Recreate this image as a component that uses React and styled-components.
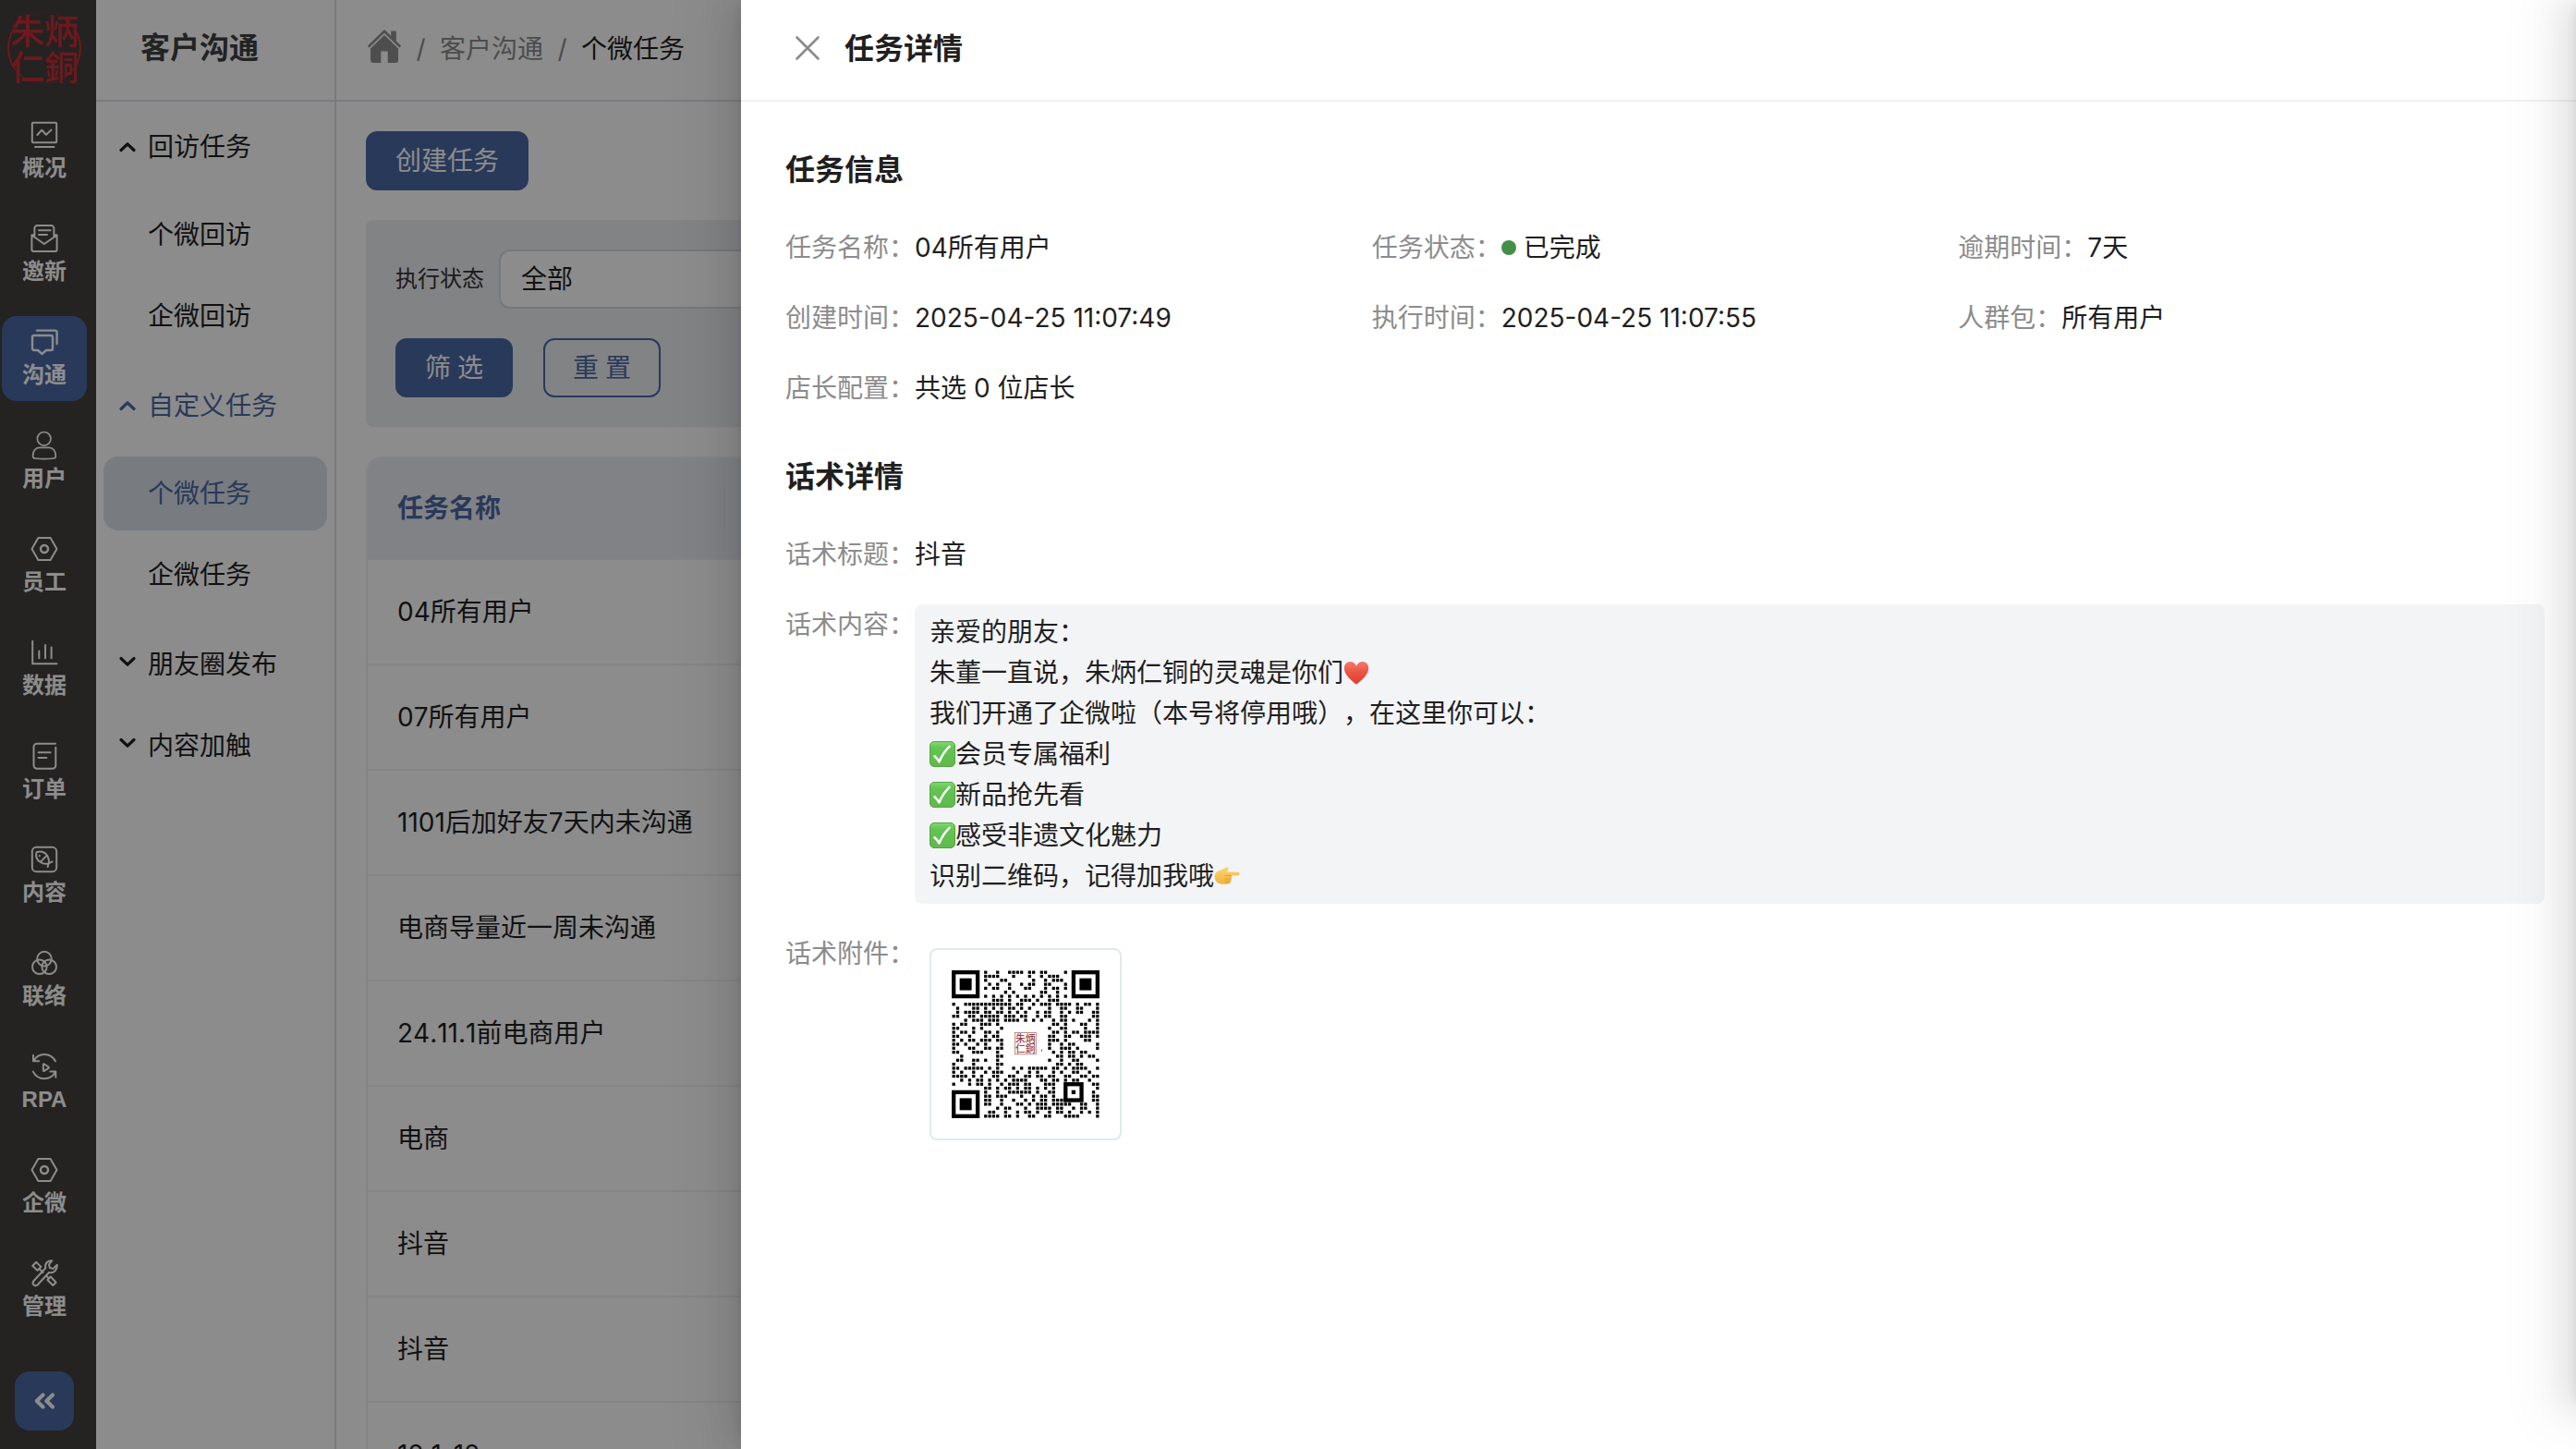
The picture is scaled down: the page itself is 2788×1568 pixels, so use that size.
import React from 'react';
import styled, { createGlobalStyle, css } from 'styled-components';

const SANS = `Inter, "Noto Sans CJK SC", sans-serif`;

const Global = createGlobalStyle`
  * { box-sizing: border-box; }
  html, body { margin: 0; height: 100%; overflow: hidden; }
  body { font-family: ${SANS}; font-size: 28px; line-height: 44px; color: #1f1f1f; background: #fff; text-spacing-trim: space-all; }
`;

const blue = '#4b69a5';

const Page = styled.div`
  position: relative;
  display: flex;
  width: 100vw;
  height: 100vh;
  overflow: hidden;
`;

/* ---------- icon rail ---------- */
const Rail = styled.nav`
  flex: none;
  width: 104px;
  display: flex;
  flex-direction: column;
  align-items: flex-start;
  background: #42403d;
  color: #fff;
`;
const Seal = styled.div`
  width: 80px;
  height: 78px;
  margin: 13px 0 27px 8px;
  display: grid;
  grid-template-columns: 37px 37px;
  grid-template-rows: 39px 39px;
  justify-content: center;
  border-radius: 50%;
  border-left: 2px solid #c82d3a;
  border-right: 2px solid #c82d3a;
  color: #c82d3a;
  font-family: "Noto Sans CJK TC", sans-serif;
  font-weight: 500;
  font-size: 37px;
  line-height: 39px;
  text-align: center;
`;
const RailList = styled.div`
  display: flex;
  flex-direction: column;
  gap: 20px;
  padding-left: 2px;
`;
const RailItem = styled.div`
  width: 92px;
  height: 92px;
  padding-top: 12px;
  display: flex;
  flex-direction: column;
  align-items: center;
  border-radius: 16px;
  background: ${(p) => (p.$active ? blue : 'transparent')};
  font-size: 24px;
  line-height: 39px;
`;
const RailLabel = styled.span`
  font-family: "Liberation Sans", "Noto Sans CJK SC", sans-serif;
  font-weight: 700;
`;
const Icon = styled.svg`
  display: block;
  width: 32px;
  height: 32px;
  fill: none;
  stroke: currentColor;
  stroke-width: 2;
  stroke-linecap: round;
  stroke-linejoin: round;
`;
const Collapse = styled.button`
  width: 64px;
  height: 64px;
  margin: auto 0 20px 16px;
  display: grid;
  place-items: center;
  padding: 0;
  border: 0;
  border-radius: 16px;
  background: ${blue};
  color: #fff;
`;

/* ---------- section menu ---------- */
const Menu = styled.aside`
  flex: none;
  width: 260px;
  border-right: 2px solid #dfdfe8;
`;
const MenuTitle = styled.h1`
  margin: 0;
  height: 110px;
  border-bottom: 2px solid #dfdfe8;
  padding-left: 48px;
  font-size: 32px;
  font-weight: 600;
  line-height: 103px;
  color: #404040;
`;
const MenuBody = styled.div`
  padding: 8px 8px 0;
  display: flex;
  flex-direction: column;
`;
const Group = styled.div`
  display: flex;
  flex-direction: column;
  gap: 8px;
  padding-bottom: ${(p) => (p.$open ? 8 : 0)}px;
  margin-bottom: 8px;
`;
const MenuRow = styled.div`
  height: 80px;
  padding: 1px 0 0 17px;
  display: flex;
  align-items: center;
  gap: 13px;
  color: ${(p) => (p.$blue ? blue : '#1f1f1f')};
`;
const Leaf = styled.div`
  height: 80px;
  line-height: 81px;
  padding-left: 48px;
  border-radius: 16px;
  color: ${(p) => (p.$active ? blue : '#1f1f1f')};
  background: ${(p) => (p.$active ? '#dae1e8' : 'transparent')};
`;
const Leaves = styled.div`
  padding-top: 8px;
  display: flex;
  flex-direction: column;
  gap: 8px;
`;
const Chevron = styled.svg`
  width: 18px;
  height: 12px;
  fill: none;
  stroke: currentColor;
  stroke-width: 3.2;
  stroke-linecap: round;
  stroke-linejoin: round;
  transform: ${(p) => (p.$open ? 'none' : 'translateY(-3px) rotate(180deg)')};
`;

/* ---------- main column ---------- */
const Main = styled.main`
  flex: 1;
  min-width: 0;
  display: flex;
  flex-direction: column;
`;
const Crumbs = styled.header`
  flex: none;
  height: 110px;
  border-bottom: 2px solid #dfdfe8;
  padding: 0 0 3px 33px;
  display: flex;
  align-items: center;
  color: #8c8c8c;
`;
const HomeIcon = styled.svg`
  width: 38px;
  height: 38px;
  margin-top: -5px;
  fill: #8f8f8f;
`;
const Slash = styled.span`
  width: 41px;
  text-align: center;
`;
const Current = styled.span`
  color: #1f1f1f;
`;
const Content = styled.div`
  padding: 32px 32px 0;
  display: flex;
  flex-direction: column;
  align-items: flex-start;
  gap: 32px;
`;
const Button = styled.button`
  height: 64px;
  padding: 0 30px;
  border: 2px solid ${blue};
  border-radius: 12px;
  font-family: inherit;
  font-size: 28px;
  line-height: 60px;
  background: ${(p) => (p.$ghost ? 'transparent' : blue)};
  color: ${(p) => (p.$ghost ? blue : '#fff')};
`;
const Filters = styled.section`
  width: 100%;
  height: 224px;
  padding: 32px;
  border-radius: 8px;
  background: #edeff3;
  display: flex;
  flex-direction: column;
  gap: 32px;
`;
const FilterLine = styled.div`
  display: flex;
  align-items: center;
  gap: ${(p) => p.$gap}px;
`;
const FilterLabel = styled.label`
  font-size: 24px;
  color: #333;
`;
const Select = styled.div`
  width: 600px;
  height: 64px;
  line-height: 61px;
  padding-left: 22px;
  border: 2px solid #d9dbe2;
  border-radius: 12px;
  background: #fff;
`;
const Pair = styled.span`
  display: inline-flex;
  gap: 7px;
`;
const Table = styled.div`
  width: 100%;
  border: 2px solid #f1f1f1;
  border-radius: 16px 16px 0 0;
  overflow: hidden;
  font-kerning: none;
`;
const cell = css`
  border-bottom: 2px solid #f1f1f1;
  padding-left: 32px;
  white-space: nowrap;
`;
const HeadRow = styled.div`
  ${cell}
  height: 110px;
  display: flex;
  align-items: center;
  background: #ebedf3;
  color: ${blue};
  font-weight: 600;
`;
const HeadCell = styled.div`
  width: 355px;
  height: 44px;
  line-height: 45px;
  border-right: 2px solid #e6e6e6;
`;
const Row = styled.div`
  ${cell}
  height: 114px;
  line-height: 113px;
`;

/* ---------- drawer ---------- */
const Mask = styled.div`
  position: absolute;
  inset: 0;
  background: rgba(0, 0, 0, 0.45);
`;
const Drawer = styled.section`
  position: absolute;
  top: 0;
  right: 0;
  bottom: 0;
  width: 1986px;
  background: #fff;
  box-shadow: -12px 0 32px 0 rgba(0, 0, 0, 0.08), -6px 0 12px -8px rgba(0, 0, 0, 0.12),
    -18px 0 56px 16px rgba(0, 0, 0, 0.05);
`;
const EdgeShade = styled.div`
  position: absolute;
  top: 0;
  bottom: 44px;
  left: 100%;
  width: 200px;
  box-shadow: -12px 0 32px 0 rgba(0, 0, 0, 0.08), -6px 0 12px -8px rgba(0, 0, 0, 0.12),
    -18px 0 56px 16px rgba(0, 0, 0, 0.05);
`;
const DrawerHead = styled.header`
  height: 110px;
  border-bottom: 2px solid #f0f0f0;
  padding: 0 48px 2px 58px;
  display: flex;
  align-items: center;
  gap: 26px;
`;
const Close = styled.svg`
  width: 28px;
  height: 28px;
  margin-top: -2px;
  fill: none;
  stroke: #8a8a8a;
  stroke-width: 2.6;
  stroke-linecap: round;
`;
const Heading = styled.h2`
  margin: 0;
  font-size: 32px;
  font-weight: 600;
  line-height: 48px;
`;
const DrawerBody = styled.div`
  padding: 50px 34px 0 48px;
`;
const SectionTitle = styled(Heading)`
  margin-bottom: 38px;
`;
const Fields = styled.div`
  display: grid;
  grid-template-columns: repeat(3, 1fr);
  row-gap: 32px;
  margin-bottom: 50px;
`;
const Field = styled.div`
  display: flex;
  align-items: flex-start;
  margin-bottom: ${(p) => p.$after || 0}px;
`;
const Label = styled.span`
  flex: none;
  color: #8c8c8c;
`;
const Status = styled.span`
  display: flex;
  align-items: center;
  gap: 8px;
  &::before {
    content: '';
    width: 16px;
    height: 16px;
    border-radius: 50%;
    background: #438f48;
  }
`;
const Message = styled.div`
  flex: 1;
  padding: 8px 16px;
  border-radius: 8px;
  background: #f3f4f6;
`;
const Line = styled.div`
  height: 44px;
  display: flex;
  align-items: center;
`;
const Emoji = styled.svg`
  width: 28px;
  height: 28px;
  flex: none;
`;
const QrFrame = styled.div`
  width: 208px;
  height: 208px;
  margin: 16px 0 0 16px;
  padding: 22px;
  border: 2px solid #e2e8f0;
  border-radius: 8px;
`;
const QrSvg = styled.svg`
  display: block;
  width: 160px;
  height: 160px;
`;

const Hex = () => (
  <>
    <path d="M9.4 4h13.2L29.5 16l-6.9 12H9.4L2.5 16z" />
    <circle cx="16" cy="16" r="4" strokeWidth="2.4" />
  </>
);

const railItems = [
  ['概况', <><rect x="2.8" y="2.8" width="26.4" height="21.4" rx="1" /><path d="M8.4 16l4.800-5.300L18 15.800l5.400-5.200M6 29h20.500" /></>],
  ['邀新', <><path d="M5.400 13V5a3 3 0 0 1 3-3h15a3 3 0 0 1 3 3v8" /><path d="M5 12.300H2.400V28a2 2 0 0 0 2 2h23.200a2 2 0 0 0 2-2V12.300H27M2.400 12.500L15.800 22l13.800-9.500M10 7.200h12.600M10 12h9" /></>],
  ['沟通', <><path d="M8 3.600h19.600a2 2 0 0 1 2 2V18" strokeWidth="2.400" /><path d="M5 9h18a2 2 0 0 1 2 2v12a2 2 0 0 1-2 2h-5l-4.500 4L9 25H5a2 2 0 0 1-2-2V11a2 2 0 0 1 2-2z" strokeWidth="2.400" /></>],
  ['用户', <g strokeWidth="1.700"><circle cx="15.700" cy="8.800" r="7.300" /><path d="M10.500 18.300h10.600c4.400 0 7.400 4 7.200 9.400 0 1.600-.9 2.200-2.400 2.300a90 90 0 0 1-19.900 0c-1.600-.1-2.400-.8-2.400-2.300-.2-5.400 2.700-9.400 6.900-9.400z" /></g>],
  ['员工', <Hex />],
  ['数据', <path d="M3.200 3.800V28.200H29.500M10.300 14.500v7.800M17 8v14.300M23.600 10.400v11.900" />],
  ['订单', <path d="M28 2.800H8A3.500 3.500 0 0 0 4.500 6.300v20A3.500 3.500 0 0 0 8 29.700h16.800a3.500 3.500 0 0 0 3.500-3.500V6.800M9.600 12.300h13M9.600 18h8.700" />],
  ['内容', <><rect x="2.800" y="2.800" width="26.400" height="26.400" rx="4.500" /><path d="M7.500 8.300c5-2 9.500 0 11.500 3.400 1.600 2.800 2.400 6 1.700 8.700-3.200.8-6.500.2-9-1.400C8 16.700 6.300 13 7.500 8.300zM11.800 18.800l6.700-6.900M20.500 20.300l-.8 3.800M20.700 20.300l3.800-1.900M10.800 12v.3" /></>],
  ['联络', <><circle cx="16" cy="11.600" r="7.800" /><circle cx="10.800" cy="20.200" r="7.800" /><circle cx="21.200" cy="20.200" r="7.800" /></>],
  ['RPA', <path d="M4.600 9.800C7 5.500 11.200 2.900 16 2.900c5.200 0 9.600 2.900 12 7.500M4 4v6.300h6.200M3.800 21.600c2.400 4.600 7 7.600 12.200 7.600 5 0 9.300-2.600 11.800-7M22.300 21.400h6v6.300M14.800 14v6.200c0 .6.6.9 1.100.6l4.600-3c.5-.3.5-1 0-1.300l-4.600-3c-.5-.3-1.100 0-1.100.5z" />],
  ['企微', <Hex />],
  ['管理', <path d="M24.300 2.200c-4.600-.6-8.200 3.300-7 8L4.300 24.300c-2.200 2.800 1.200 6.400 4.200 4.200L21 15c4.800 1.200 9.200-2.700 8.700-8.300l-4.200 4.200-3.600-.9-.9-3.700zM7.200 3.800l-4 3.900 5.300 5.100 3.900-3.900zM10.700 11.200l3.800 3.800M17.800 18.500l2.800 2.600M22.800 19.500l5.800 6.200-3.300 3.300-5.900-6z" />],
];

const groups = [
  { title: '回访任务', open: true, leaves: ['个微回访', '企微回访'] },
  { title: '自定义任务', open: true, blue: true, leaves: ['个微任务', '企微任务'], active: '个微任务' },
  { title: '朋友圈发布' },
  { title: '内容加触' },
];

const tasks = ['04所有用户', '07所有用户', '1101后加好友7天内未沟通', '电商导量近一周未沟通', '24.11.1前电商用户', '电商', '抖音', '抖音', '12.1-12'];

/* one string per module row, finder and alignment patterns left out */
const modules = [
  '        #  #  #### ## ##    #',
  '        ####   #   #  # ###',
  '        #   ##      #  # ###  #',
  '         # #  #  # ##  ##   #',
  '        # ##  #   ##   # ## #',
  '             # #      ##  #',
  '        # # # # # # # # # # #',
  '          ### #  ### #  ###',
  '#  ############ ##  # ### #### # ## #',
  ' #   ## # # # ## # #    #  ##  ##   #',
  ' # #### ## ## # # #  # ##  # # ##  ##',
  '##  ## ##### ### ##  # ##  ##      ##',
  '   # ### ### #### # # #  # ## #   # #',
  '# ##   ### #             ## #   ##  #',
  '##   # #    #           #  ##    #  #',
  '# ## #  ## #             ## # ## ####',
  '##  #   # ##            ##  ##  ### #',
  '# # ## ### ##           ### #    ##  ',
  '## #  # #   #           #  # ##     #',
  '#   ##  ## ##           #  ### #    #',
  '##   ###   #             # # ## ##   ',
  '  #        ##             ## ## # ## ',
  ' ##  ## #  #            #  #  ##    #',
  '#    #     ##             ## # ##    ',
  '## ##### # #   # # ##### ## # ####  #',
  '# #  #  # ###   #  # #   # #  ##  #  ',
  '#### # #  ##  ##  ## ## ##  ##  ## ##',
  '  # # ## # # # ####   ## ## # ##  #  ',
  '#   # ## #  # ### ##   ###         ##',
  '        ## # ## # ## # # #          #',
  '        #  #  ###### #  ##         # ',
  '        ## ###   #  # ## #         ##',
  '        ##  #  #  # # ## ###       ##',
  '        ##  #   ## # ### #####  ##  #',
  '           # ##   #  #### ##  # ##  #',
  '         ##  #  # ## #  # ## #  # # #',
  '        #### ## #  ##  ##   ####    #',
];

const Finder = ({ x, y }) => (
  <g transform={`translate(${x} ${y})`}>
    <rect width="7" height="7" fill="#000" />
    <rect x="1" y="1" width="5" height="5" fill="#fff" />
    <rect x="2" y="2" width="3" height="3" fill="#000" />
  </g>
);

const QrCode = () => (
  <QrSvg viewBox="0 0 37 37">
    {modules.map((row, y) =>
      [...row].map((c, x) => (c === '#' ? <rect key={`${x}-${y}`} x={x + 0.12} y={y + 0.12} width="0.76" height="0.76" /> : null))
    )}
    <Finder x={0} y={0} />
    <Finder x={30} y={0} />
    <Finder x={0} y={30} />
    <rect x="28" y="28" width="5" height="5" fill="#000" />
    <rect x="29" y="29" width="3" height="3" fill="#fff" />
    <rect x="30" y="30" width="1" height="1" fill="#000" />
    <rect x="15.8" y="15.6" width="5.3" height="5.4" fill="none" stroke="#a86a68" strokeWidth="0.18" />
    <g fill="#9c4040" fontFamily='"Noto Sans CJK TC", sans-serif' fontSize="2.5" fontWeight="500">
      <text x="15.95" y="18">朱炳</text>
      <text x="15.95" y="20.7">仁銅</text>
    </g>
    <rect x="22.45" y="19.8" width="0.2" height="0.5" fill="#444" />
  </QrSvg>
);

const Check = () => (
  <Emoji viewBox="0 0 28 28" role="img" aria-label="✅">
    <defs>
      <linearGradient id="ck" x1="0" y1="0" x2="0" y2="1">
        <stop offset="0" stopColor="#84d873" />
        <stop offset="0.25" stopColor="#62c554" />
        <stop offset="1" stopColor="#61b84b" />
      </linearGradient>
    </defs>
    <rect x="0.5" y="0.5" width="27" height="27" rx="4.5" fill="url(#ck)" stroke="#55a545" />
    <path d="M5.5 16.200c1.900 1.500 3.600 3.800 4.900 6.300C13.400 15.400 17 10 21.600 5.800" fill="none" stroke="#fff" strokeWidth="2.500" strokeLinecap="round" strokeLinejoin="round" />
  </Emoji>
);

const Heart = () => (
  <Emoji viewBox="0 0 28 28" role="img" aria-label="❤️">
    <defs>
      <linearGradient id="ht" x1="0" y1="0" x2="0" y2="1">
        <stop offset="0" stopColor="#f47a6c" />
        <stop offset="0.45" stopColor="#ec5545" />
        <stop offset="1" stopColor="#df3b2d" />
      </linearGradient>
    </defs>
    <path d="M14 26.500C8.500 22.500.8 16 .8 9 .8 4.800 3.800 2 7.300 2 10.300 2 12.800 3.800 14 6.800 15.200 3.800 17.700 2 20.700 2c3.500 0 6.500 2.800 6.500 7 0 7-7.700 13.500-13.200 17.500z" fill="url(#ht)" />
  </Emoji>
);

const Point = () => (
  <Emoji viewBox="0 0 28 28" role="img" aria-label="👉">
    <defs>
      <linearGradient id="pt" x1="0" y1="0" x2="0" y2="1">
        <stop offset="0" stopColor="#fbd56a" />
        <stop offset="1" stopColor="#efb241" />
      </linearGradient>
    </defs>
    <path d="M.6 14.500c0-3.500 1.800-5.300 4.700-6.300 3-1 5.600-2 7.600-3.400 1.600-1 3.400.5 2.600 2.200-.4 1-1.300 1.800-2 2.500l12.300.2c2.500.1 2.500 3.600 0 3.700l-7.300.2c1.500.6 1.400 2.900-.2 3.300 1 .9.6 2.700-.9 3 .5 1.400-.4 2.500-1.900 2.600-3 .2-6.500.4-9.300-.3C2.500 21.200.6 18.500.6 14.500z" fill="url(#pt)" />
    <path d="M11.500 13.700h7M12 17h6M12.300 20h4.800" stroke="#d9962c" strokeWidth="0.9" strokeLinecap="round" />
  </Emoji>
);

const fields = [
  { l: '任务名称：', v: '04所有用户' },
  { l: '任务状态：', v: <Status>已完成</Status> },
  { l: '逾期时间：', v: '7天' },
  { l: '创建时间：', v: '2025-04-25 11:07:49' },
  { l: '执行时间：', v: '2025-04-25 11:07:55' },
  { l: '人群包：', v: '所有用户' },
  { l: '店长配置：', v: '共选 0 位店长' },
];

export default function App() {
  return (
    <>
      <Global />
      <Page>
        <Rail>
          <Seal><span>朱</span><span>炳</span><span>仁</span><span>銅</span></Seal>
          <RailList>
            {railItems.map(([name, art], i) => (
              <RailItem key={name} $active={i === 2}>
                <Icon viewBox="0 0 32 32">{art}</Icon>
                <RailLabel>{name}</RailLabel>
              </RailItem>
            ))}
          </RailList>
          <Collapse>
            <Icon viewBox="0 0 32 32"><g strokeWidth="4.2"><path d="M14.500 9.500L7.800 16l6.700 6.500M25 9.500L18.300 16l6.700 6.500" /></g></Icon>
          </Collapse>
        </Rail>

        <Menu>
          <MenuTitle>客户沟通</MenuTitle>
          <MenuBody>
            {groups.map((g) => (
              <Group key={g.title} $open={g.open}>
                <MenuRow $blue={g.blue}>
                  <Chevron viewBox="0 0 18 12" $open={g.open}><path d="M2 9.500L9 2.800l7 6.700" /></Chevron>
                  {g.title}
                </MenuRow>
                {g.leaves && (
                  <Leaves>
                    {g.leaves.map((t) => <Leaf key={t} $active={t === g.active}>{t}</Leaf>)}
                  </Leaves>
                )}
              </Group>
            ))}
          </MenuBody>
        </Menu>

        <Main>
          <Crumbs>
            <HomeIcon viewBox="0 0 38 38">
              <path d="M19 1L.8 18.700l1.800 1.800L19 4.800l16.400 15.700 1.800-1.800-5.400-5.200V2.500h-5.600v5.400z" />
              <path d="M19 7L4 21.500V34a3 3 0 0 0 3 3h8.300V24.500h7.400V37H31a3 3 0 0 0 3-3V21.500z" />
            </HomeIcon>
            <Slash>/</Slash>
            客户沟通
            <Slash>/</Slash>
            <Current>个微任务</Current>
          </Crumbs>
          <Content>
            <Button>创建任务</Button>
            <Filters>
              <FilterLine $gap={16}>
                <FilterLabel>执行状态</FilterLabel>
                <Select>全部</Select>
              </FilterLine>
              <FilterLine $gap={33}>
                <Button><Pair><span>筛</span><span>选</span></Pair></Button>
                <Button $ghost><Pair><span>重</span><span>置</span></Pair></Button>
              </FilterLine>
            </Filters>
            <Table>
              <HeadRow><HeadCell>任务名称</HeadCell></HeadRow>
              {tasks.map((t, i) => <Row key={i}>{t}</Row>)}
            </Table>
          </Content>
        </Main>

        <Mask />
        <Drawer>
          <DrawerHead>
            <Close viewBox="0 0 28 28"><path d="M2.500 2.500l23 23M25.500 2.500l-23 23" /></Close>
            <Heading>任务详情</Heading>
          </DrawerHead>
          <DrawerBody>
            <SectionTitle>任务信息</SectionTitle>
            <Fields>
              {fields.map((f) => <Field key={f.l}><Label>{f.l}</Label>{f.v}</Field>)}
            </Fields>
            <SectionTitle>话术详情</SectionTitle>
            <Field $after={32}><Label>话术标题：</Label>抖音</Field>
            <Field $after={32}>
              <Label>话术内容：</Label>
              <Message>
                <Line>亲爱的朋友：</Line>
                <Line>朱董一直说，朱炳仁铜的灵魂是你们<Heart /></Line>
                <Line>我们开通了企微啦（本号将停用哦），在这里你可以：</Line>
                <Line><Check />会员专属福利</Line>
                <Line><Check />新品抢先看</Line>
                <Line><Check />感受非遗文化魅力</Line>
                <Line>识别二维码，记得加我哦<Point /></Line>
              </Message>
            </Field>
            <Field>
              <Label>话术附件：</Label>
              <QrFrame><QrCode /></QrFrame>
            </Field>
          </DrawerBody>
        </Drawer>
        <EdgeShade />
      </Page>
    </>
  );
}
